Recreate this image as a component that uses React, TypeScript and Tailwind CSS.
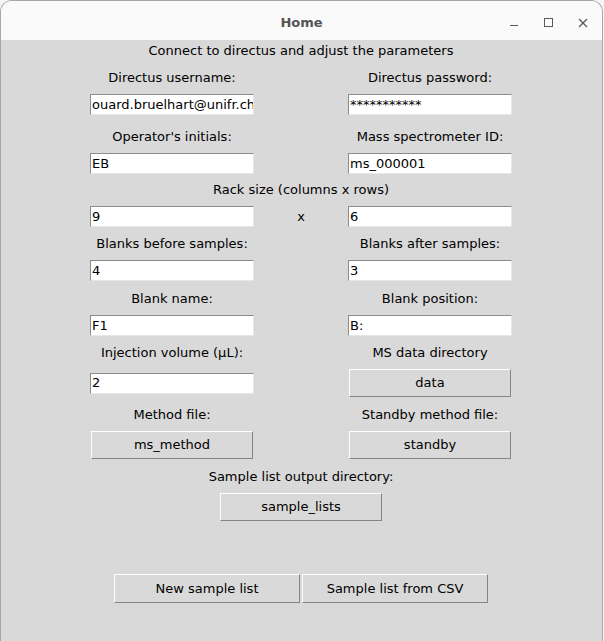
import React from "react";

const font = { fontFamily: '"DejaVu Sans", sans-serif' };

function Label({ children }: { children: React.ReactNode }) {
  return (
    <div className="h-[18px] flex items-center justify-center text-[13px] leading-[18px] text-black whitespace-nowrap">
      {children}
    </div>
  );
}

function Entry({ value }: { value: string }) {
  return (
    <div className="w-[164px] h-[21px] bg-white border border-t-[#8c8c8c] border-l-[#8c8c8c] border-r-[#e6e6e6] border-b-[#e6e6e6] overflow-hidden flex items-center pl-[1px] text-[13px] text-black whitespace-nowrap">
      {value}
    </div>
  );
}

function Btn({ label, w = "w-[162px]", h = "h-[28px]" }: { label: string; w?: string; h?: string }) {
  return (
    <div
      className={`${w} ${h} bg-[#d9d9d9] border border-t-white border-l-white border-r-[#858585] border-b-[#858585] flex items-center justify-center text-[13px] text-black whitespace-nowrap`}
    >
      {label}
    </div>
  );
}

function Row({
  left,
  right,
  mid,
}: {
  left: React.ReactNode;
  right: React.ReactNode;
  mid?: React.ReactNode;
}) {
  return (
    <div className="ml-[89px] w-[422px] grid grid-cols-[164px_94px_164px] items-center">
      <div className="flex justify-center">{left}</div>
      <div className="flex justify-center text-[13px]">{mid}</div>
      <div className="flex justify-center">{right}</div>
    </div>
  );
}

export default function App() {
  return (
    <div className="w-[604px] h-[641px] bg-[#f6f6f6] overflow-hidden" style={font}>
      <div className="w-[603px] h-[641px] flex flex-col rounded-t-[12px] border border-b-0 border-[#a8a8a8] overflow-hidden bg-[#d9d9d9]">
        {/* title bar */}
        <div className="h-[39px] shrink-0 bg-[#fafafa] relative flex items-center justify-center pt-[5px]">
          <span className="text-[13px] font-bold text-[#545454]">Home</span>
          <div className="absolute right-[3px] top-0 h-full flex items-center">
            <svg width="100" height="39" viewBox="0 0 100 39" className="text-[#5a5a5a]">
              <line x1="11" y1="24.5" x2="19" y2="24.5" stroke="currentColor" strokeWidth="1" />
              <rect x="45.5" y="17.5" width="8" height="8" fill="none" stroke="currentColor" strokeWidth="1" />
              <line x1="80" y1="18" x2="88" y2="26" stroke="currentColor" strokeWidth="1.2" />
              <line x1="88" y1="18" x2="80" y2="26" stroke="currentColor" strokeWidth="1.2" />
            </svg>
          </div>
        </div>

        {/* body */}
        <div className="flex flex-col">
          <div className="h-[20px] mt-[1px] ml-[89px] w-[422px] flex items-center justify-center text-[13px] text-black whitespace-nowrap">
            Connect to directus and adjust the parameters
          </div>

          <div className="mt-[8px]">
            <Row left={<Label>Directus username:</Label>} right={<Label>Directus password:</Label>} />
          </div>
          <div className="mt-[7px]">
            <Row left={<Entry value="ouard.bruelhart@unifr.ch" />} right={<Entry value="***********" />} />
          </div>

          <div className="mt-[13px]">
            <Row left={<Label>Operator's initials:</Label>} right={<Label>Mass spectrometer ID:</Label>} />
          </div>
          <div className="mt-[7px]">
            <Row left={<Entry value="EB" />} right={<Entry value="ms_000001" />} />
          </div>

          <div className="mt-[7px] ml-[89px] w-[422px]">
            <Label>Rack size (columns x rows)</Label>
          </div>
          <div className="mt-[7px]">
            <Row left={<Entry value="9" />} mid={<span>x</span>} right={<Entry value="6" />} />
          </div>

          <div className="mt-[8px]">
            <Row left={<Label>Blanks before samples:</Label>} right={<Label>Blanks after samples:</Label>} />
          </div>
          <div className="mt-[7px]">
            <Row left={<Entry value="4" />} right={<Entry value="3" />} />
          </div>

          <div className="mt-[9px]">
            <Row left={<Label>Blank name:</Label>} right={<Label>Blank position:</Label>} />
          </div>
          <div className="mt-[7px]">
            <Row left={<Entry value="F1" />} right={<Entry value="B:" />} />
          </div>

          <div className="mt-[8px]">
            <Row left={<Label>Injection volume (µL):</Label>} right={<Label>MS data directory</Label>} />
          </div>
          <div className="mt-[7px]">
            <Row left={<Entry value="2" />} right={<Btn label="data" />} />
          </div>

          <div className="mt-[9px]">
            <Row left={<Label>Method file:</Label>} right={<Label>Standby method file:</Label>} />
          </div>
          <div className="mt-[7px]">
            <Row left={<Btn label="ms_method" />} right={<Btn label="standby" />} />
          </div>

          <div className="mt-[9px] ml-[89px] w-[422px]">
            <Label>Sample list output directory:</Label>
          </div>
          <div className="mt-[7px] ml-[89px] w-[422px] flex justify-center">
            <Btn label="sample_lists" />
          </div>

          <div className="mt-[53px] ml-[89px] w-[422px] flex justify-center gap-[2px]">
            <Btn label="New sample list" w="w-[186px]" h="h-[29px]" />
            <Btn label="Sample list from CSV" w="w-[186px]" h="h-[29px]" />
          </div>
        </div>
      </div>
    </div>
  );
}
